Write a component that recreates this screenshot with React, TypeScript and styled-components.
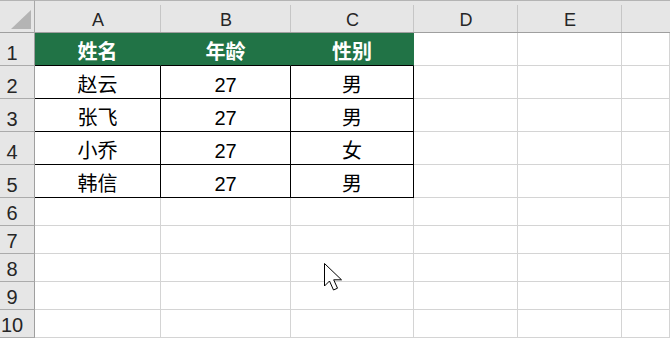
import React from "react";
import styled, { createGlobalStyle } from "styled-components";

const GRID = "#d4d4d4";
const GREEN = "#217346";
const HEAD_BG = "#e6e6e6";

const columns = ["A", "B", "C", "D", "E", ""];
const columnWidths = [126, 130, 123, 104, 104];

const tableHead = ["姓名", "年龄", "性别"];
const tableRows = [
  ["赵云", "27", "男"],
  ["张飞", "27", "男"],
  ["小乔", "27", "女"],
  ["韩信", "27", "男"],
];

const rowCount = 10;

const GlobalStyle = createGlobalStyle`
  html, body {
    margin: 0;
    padding: 0;
    background: #ffffff;
    overflow: hidden;
  }
  body {
    font-family: "Liberation Sans", "Noto Sans CJK SC", sans-serif;
  }
`;

const Sheet = styled.div`
  position: relative;
  width: 670px;
  height: 339px;
  overflow: hidden;
  display: grid;
  grid-template-columns: 35px ${columnWidths.map((w) => `${w}px`).join(" ")} 1fr;
  grid-template-rows: 33px repeat(5, 33px) repeat(${rowCount - 5}, 28px) 1fr;
`;

const Corner = styled.div`
  position: relative;
  box-sizing: border-box;
  background: ${HEAD_BG};
  border-top: 1px solid #b4b4b4;
  border-bottom: 1px solid #9f9f9f;
  border-right: 1px solid #a8a8a8;

  &::before {
    content: "";
    position: absolute;
    left: 11px;
    top: 9px;
    width: 0;
    height: 0;
    border-style: solid;
    border-width: 0 0 19px 20px;
    border-color: transparent transparent #b4b4b4 transparent;
  }
`;

const ColumnHead = styled.div<{ $last?: boolean }>`
  position: relative;
  box-sizing: border-box;
  background: ${HEAD_BG};
  border-top: 1px solid #b4b4b4;
  border-bottom: 1px solid #9f9f9f;
  display: flex;
  align-items: flex-end;
  justify-content: center;
  padding-bottom: 3px;
  font-size: 18px;
  line-height: 1;
  color: #262626;

  &::after {
    content: "";
    display: ${(p) => (p.$last ? "none" : "block")};
    position: absolute;
    right: 0;
    top: 4px;
    bottom: 0;
    width: 1px;
    background: #c6c6c6;
  }
`;

const RowHead = styled.div`
  box-sizing: border-box;
  background: ${HEAD_BG};
  border-right: 1px solid #9f9f9f;
  border-bottom: 1px solid #ababab;
  display: flex;
  align-items: flex-end;
  justify-content: center;
  padding: 0 10px 2px 0;
  font-size: 20px;
  line-height: 1;
  color: #262626;
`;

const Cell = styled.div<{
  $bg?: string;
  $right?: string;
  $bottom?: string;
  $bold?: boolean;
  $color?: string;
}>`
  box-sizing: border-box;
  background: ${(p) => p.$bg || "#ffffff"};
  border-right: 1px solid ${(p) => p.$right || GRID};
  border-bottom: 1px solid ${(p) => p.$bottom || GRID};
  display: flex;
  align-items: flex-end;
  justify-content: center;
  padding-bottom: 3px;
  font-family: "Liberation Sans", "Noto Sans CJK SC", sans-serif;
  font-size: 20px;
  line-height: 1;
  font-weight: ${(p) => (p.$bold ? 700 : 400)};
  color: ${(p) => p.$color || "#000000"};
  white-space: nowrap;
`;

const Pointer = styled.svg`
  position: absolute;
  left: 324px;
  top: 263px;
`;

const cellFor = (row: number, col: number) => {
  const inTable = col < 3 && row <= 5;
  if (!inTable) return <Cell key={`${row}-${col}`} />;
  if (row === 1) {
    return (
      <Cell
        key={`${row}-${col}`}
        $bg={GREEN}
        $right={GREEN}
        $bottom="#000000"
        $bold
        $color="#ffffff"
      >
        {tableHead[col]}
      </Cell>
    );
  }
  return (
    <Cell key={`${row}-${col}`} $right="#000000" $bottom="#000000">
      {tableRows[row - 2][col]}
    </Cell>
  );
};

const App = () => {
  const rows = Array.from({ length: rowCount }, (_, i) => i + 1);
  return (
    <>
      <GlobalStyle />
      <Sheet>
        <Corner />
        {columns.map((c, i) => (
          <ColumnHead key={c || "last"} $last={i === columns.length - 1}>
            {c}
          </ColumnHead>
        ))}
        {rows.map((r) => (
          <React.Fragment key={r}>
            <RowHead>{r}</RowHead>
            {columns.map((_, col) => cellFor(r, col))}
          </React.Fragment>
        ))}
        <Pointer width="22" height="30" viewBox="0 0 22 30">
          <path
            d="M0.5 0.5 L0.5 23 L5.5 18 L9.5 27 L13.5 25.2 L9.7 16.8 L17.5 16.8 Z"
            fill="#ffffff"
            stroke="#000000"
            strokeWidth="1"
            strokeLinejoin="miter"
          />
        </Pointer>
      </Sheet>
    </>
  );
};

export default App;
